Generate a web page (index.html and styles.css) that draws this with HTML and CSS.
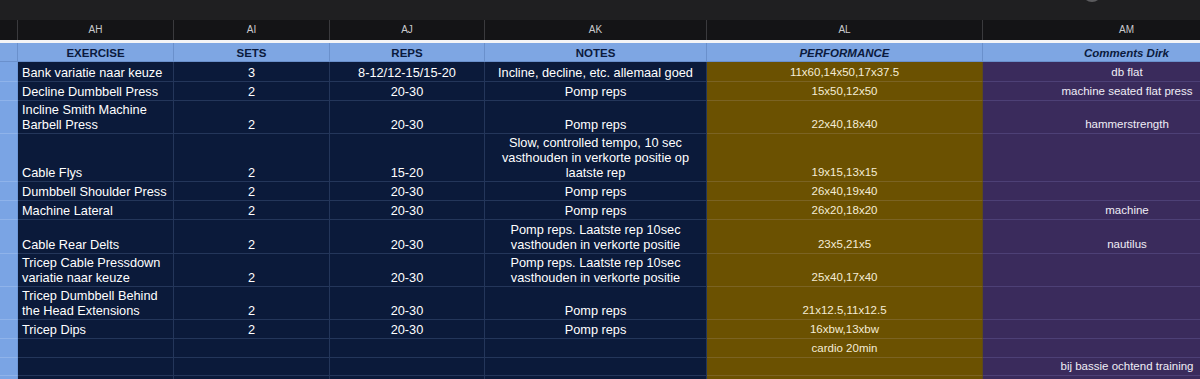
FILE: index.html
```html
<!DOCTYPE html>
<html>
<head>
<meta charset="utf-8">
<link rel="stylesheet" href="styles.css">
</head>
<body>
<div class="app">
  <div class="topbar"><div class="top-btn"></div></div>
  <div class="row colbar">
    <div class="c"></div>
    <div class="c">AH</div>
    <div class="c">AI</div>
    <div class="c">AJ</div>
    <div class="c">AK</div>
    <div class="c">AL</div>
    <div class="c">AM</div>
  </div>
  <div class="freeze"></div>
  <div class="row head">
    <div class="c rh"></div>
    <div class="c">EXERCISE</div>
    <div class="c">SETS</div>
    <div class="c">REPS</div>
    <div class="c">NOTES</div>
    <div class="c it">PERFORMANCE</div>
    <div class="c it">Comments Dirk</div>
  </div>

  <div class="row data h20">
    <div class="c rh"></div>
    <div class="c ex">Bank variatie naar keuze</div>
    <div class="c ctr">3</div>
    <div class="c ctr">8-12/12-15/15-20</div>
    <div class="c ctr">Incline, decline, etc. allemaal goed</div>
    <div class="c perf">11x60,14x50,17x37.5</div>
    <div class="c com">db flat</div>
  </div>
  <div class="row data h19">
    <div class="c rh"></div>
    <div class="c ex">Decline Dumbbell Press</div>
    <div class="c ctr">2</div>
    <div class="c ctr">20-30</div>
    <div class="c ctr">Pomp reps</div>
    <div class="c perf">15x50,12x50</div>
    <div class="c com">machine seated flat press</div>
  </div>
  <div class="row data h33">
    <div class="c rh"></div>
    <div class="c ex">Incline Smith Machine<br>Barbell Press</div>
    <div class="c ctr">2</div>
    <div class="c ctr">20-30</div>
    <div class="c ctr">Pomp reps</div>
    <div class="c perf">22x40,18x40</div>
    <div class="c com">hammerstrength</div>
  </div>
  <div class="row data h48">
    <div class="c rh"></div>
    <div class="c ex">Cable Flys</div>
    <div class="c ctr">2</div>
    <div class="c ctr">15-20</div>
    <div class="c ctr">Slow, controlled tempo, 10 sec<br>vasthouden in verkorte positie op<br>laatste rep</div>
    <div class="c perf">19x15,13x15</div>
    <div class="c com"></div>
  </div>
  <div class="row data h19">
    <div class="c rh"></div>
    <div class="c ex">Dumbbell Shoulder Press</div>
    <div class="c ctr">2</div>
    <div class="c ctr">20-30</div>
    <div class="c ctr">Pomp reps</div>
    <div class="c perf">26x40,19x40</div>
    <div class="c com"></div>
  </div>
  <div class="row data h19">
    <div class="c rh"></div>
    <div class="c ex">Machine Lateral</div>
    <div class="c ctr">2</div>
    <div class="c ctr">20-30</div>
    <div class="c ctr">Pomp reps</div>
    <div class="c perf">26x20,18x20</div>
    <div class="c com">machine</div>
  </div>
  <div class="row data h34">
    <div class="c rh"></div>
    <div class="c ex">Cable Rear Delts</div>
    <div class="c ctr">2</div>
    <div class="c ctr">20-30</div>
    <div class="c ctr">Pomp reps. Laatste rep 10sec<br>vasthouden in verkorte positie</div>
    <div class="c perf">23x5,21x5</div>
    <div class="c com">nautilus</div>
  </div>
  <div class="row data h33">
    <div class="c rh"></div>
    <div class="c ex">Tricep Cable Pressdown<br>variatie naar keuze</div>
    <div class="c ctr">2</div>
    <div class="c ctr">20-30</div>
    <div class="c ctr">Pomp reps. Laatste rep 10sec<br>vasthouden in verkorte positie</div>
    <div class="c perf">25x40,17x40</div>
    <div class="c com"></div>
  </div>
  <div class="row data h33">
    <div class="c rh"></div>
    <div class="c ex">Tricep Dumbbell Behind<br>the Head Extensions</div>
    <div class="c ctr">2</div>
    <div class="c ctr">20-30</div>
    <div class="c ctr">Pomp reps</div>
    <div class="c perf">21x12.5,11x12.5</div>
    <div class="c com"></div>
  </div>
  <div class="row data h19">
    <div class="c rh"></div>
    <div class="c ex">Tricep Dips</div>
    <div class="c ctr">2</div>
    <div class="c ctr">20-30</div>
    <div class="c ctr">Pomp reps</div>
    <div class="c perf">16xbw,13xbw</div>
    <div class="c com"></div>
  </div>
  <div class="row data h19">
    <div class="c rh"></div>
    <div class="c ex"></div>
    <div class="c ctr"></div>
    <div class="c ctr"></div>
    <div class="c ctr"></div>
    <div class="c perf">cardio 20min</div>
    <div class="c com"></div>
  </div>
  <div class="row data h18">
    <div class="c rh"></div>
    <div class="c ex"></div>
    <div class="c ctr"></div>
    <div class="c ctr"></div>
    <div class="c ctr"></div>
    <div class="c perf"></div>
    <div class="c com">bij bassie ochtend training</div>
  </div>
  <div class="row data h19">
    <div class="c rh"></div>
    <div class="c ex"></div>
    <div class="c ctr"></div>
    <div class="c ctr"></div>
    <div class="c ctr"></div>
    <div class="c perf"></div>
    <div class="c com"></div>
  </div>
</div>
</body>
</html>
```

FILE: styles.css
```css
html, body {
  margin: 0;
  padding: 0;
  background: #0b1a3a;
  overflow: hidden;
}

.app {
  position: relative;
  width: 1271px;
  font-family: "Liberation Sans", Arial, sans-serif;
}

.topbar {
  height: 20px;
  background: #1f1f21;
}

.top-btn {
  position: absolute;
  left: 1082px;
  top: -18px;
  width: 20px;
  height: 20px;
  border-radius: 50%;
  background: #5b5b5e;
}

.row {
  display: grid;
  grid-template-columns: 18px 156px 156px 155px 222px 276px 288px;
}

.c {
  box-sizing: border-box;
  border-right: 1px solid #24365a;
  border-bottom: 1px solid #24365a;
  overflow: hidden;
  white-space: nowrap;
}

/* column letters */
.colbar {
  height: 20px;
  background: #141416;
}
.colbar .c {
  border-right: 1px solid #3a3a3d;
  border-bottom: none;
  color: #c9c9cc;
  font-size: 10px;
  line-height: 20px;
  text-align: center;
}

.freeze {
  height: 3px;
  background: #f4f4f6;
}

/* header row */
.head {
  height: 19px;
  background: #7ea6e3;
}
.head .c {
  border-right: 1px solid #6a90cc;
  border-bottom: 1px solid #6a90cc;
  padding-top: 2px;
  color: #0b1a3d;
  font-weight: bold;
  font-size: 11.5px;
  line-height: 16px;
  text-align: center;
}
.head .it {
  font-style: italic;
}

/* data rows */
.data .c {
  display: flex;
  flex-direction: column;
  justify-content: flex-end;
  padding: 0 4px 1px;
  font-size: 12.75px;
  line-height: 15px;
  color: #ffffff;
}
.data .rh {
  background: #7aa4e4;
  border-right: 1px solid #6e98d8;
  border-bottom: 1px solid #8fb3ea;
  padding: 0;
}
.data .ex {
  text-align: left;
}
.data .ctr {
  text-align: center;
}
.data .perf {
  background: #6b5101;
  border-right: 1px solid #5c4a1a;
  border-bottom: 1px solid #7b6323;
  text-align: center;
  font-size: 11.5px;
  color: #f4ecd6;
}
.data .com {
  background: #3a2b5c;
  border-right: none;
  border-bottom: 1px solid #4d4076;
  text-align: center;
  font-size: 11.5px;
  color: #f0edf6;
}

.h18 { height: 18px; }
.h19 { height: 19px; }
.h20 { height: 20px; }
.h33 { height: 33px; }
.h34 { height: 34px; }
.h48 { height: 48px; }
```
